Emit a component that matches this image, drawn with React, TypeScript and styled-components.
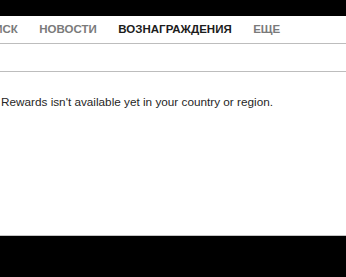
import React from "react";
import styled, { createGlobalStyle } from "styled-components";

const Global = createGlobalStyle`
  html, body { margin: 0; padding: 0; background: #000; }
  body { font-family: "Liberation Sans", Arial, sans-serif; }
`;

const Frame = styled.div`
  width: 346px;
  height: 277px;
  display: flex;
  flex-direction: column;
  background: #000;
  overflow: hidden;
`;

const TopBar = styled.div`
  height: 16px;
  background: #000;
  flex-shrink: 0;
`;

const Page = styled.div`
  height: 219px;
  background: #fff;
  border-bottom: 1px solid #c4c4c4;
  display: flex;
  flex-direction: column;
`;

const Nav = styled.nav`
  height: 27px;
  border-bottom: 1px solid #bdbdbd;
  display: flex;
  align-items: center;
  gap: 21.5px;
  margin-left: -23px;
  overflow: hidden;
`;

const NavItem = styled.span<{ $active?: boolean }>`
  font-size: 11.5px;
  line-height: 27px;
  font-weight: 700;
  white-space: nowrap;
  color: ${(p) => (p.$active ? "#1c1c1c" : "#7a7a7a")};
`;

const SubBar = styled.div`
  height: 27px;
  border-bottom: 1px solid #bdbdbd;
`;

const Content = styled.div`
  padding: 23px 2px 0 1px;
`;

const Message = styled.p`
  margin: 0;
  font-size: 11.75px;
  line-height: 14px;
  color: #262626;
`;

export default function App() {
  const items = [
    { label: "ПОИСК" },
    { label: "НОВОСТИ" },
    { label: "ВОЗНАГРАЖДЕНИЯ", active: true },
    { label: "ЕЩЕ" },
  ];
  return (
    <>
      <Global />
      <Frame>
        <TopBar />
        <Page>
          <Nav>
            {items.map((it) => (
              <NavItem key={it.label} $active={it.active}>
                {it.label}
              </NavItem>
            ))}
          </Nav>
          <SubBar />
          <Content>
            <Message>Rewards isn't available yet in your country or region.</Message>
          </Content>
        </Page>
      </Frame>
    </>
  );
}
